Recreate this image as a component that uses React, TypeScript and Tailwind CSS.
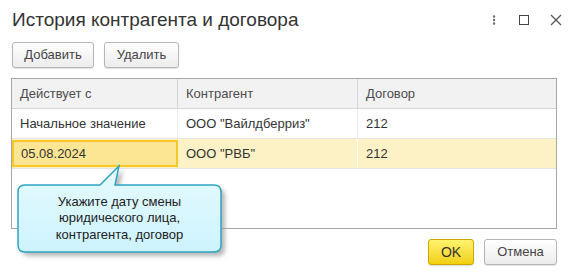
import { MoreVertical } from "lucide-react";

const rows = [
  { date: "Начальное значение", partner: "ООО \"Вайлдберриз\"", contract: "212", selected: false },
  { date: "05.08.2024", partner: "ООО \"РВБ\"", contract: "212", selected: true },
];

function Hint() {
  return (
    <div className="absolute left-[14px] top-[163px] w-[216px] h-[98px]">
      <svg width="216" height="98" className="absolute inset-0">
        <defs>
          <filter id="sh" x="-10%" y="-10%" width="130%" height="140%">
            <feGaussianBlur stdDeviation="2" />
          </filter>
          <linearGradient id="fill" x1="0" y1="0" x2="0" y2="1">
            <stop offset="0" stopColor="#e6fbff" />
            <stop offset="1" stopColor="#cdf3fd" />
          </linearGradient>
        </defs>
        <path
          d="M11 22 H86 L105 3 L101 22 H200 Q207 22 207 29 V82 Q207 89 200 89 H11 Q4 89 4 82 V29 Q4 22 11 22 Z"
          transform="translate(4 4)"
          fill="#9a9a9a"
          opacity="0.7"
          filter="url(#sh)"
        />
        <path
          d="M11 22 H86 L105 3 L101 22 H200 Q207 22 207 29 V82 Q207 89 200 89 H11 Q4 89 4 82 V29 Q4 22 11 22 Z"
          fill="url(#fill)"
          stroke="#2fa3c2"
          strokeWidth="1.5"
        />
      </svg>
      <div className="absolute left-[4px] top-[22px] w-[203px] h-[67px] flex flex-col items-center justify-center text-[13px] leading-[16.5px] text-[#222]">
        <span>Укажите дату смены</span>
        <span>юридического лица,</span>
        <span>контрагента, договор</span>
      </div>
    </div>
  );
}

export default function App() {
  return (
    <div
      className="relative w-[571px] h-[275px] bg-white flex flex-col text-[#333] overflow-hidden"
      style={{ fontFamily: "'Liberation Sans', Arial, sans-serif" }}
    >
      {/* Title bar */}
      <div className="h-[40px] flex items-center pl-[12px] pr-[9px]">
        <h1 className="text-[19px] text-[#333] flex-1">История контрагента и договора</h1>
        <div className="flex items-center gap-[19px] text-[#666]">
          <MoreVertical className="w-[12px] h-[14px]" strokeWidth={3} strokeDasharray="2 2" />
          <span className="w-[10px] h-[10px] border-[1.5px] border-[#444]" />
          <svg width="12" height="12" viewBox="0 0 12 12" className="ml-[2px]">
            <path d="M1 1 L11 11 M11 1 L1 11" stroke="#555" strokeWidth="1.3" />
          </svg>
        </div>
      </div>

      {/* Toolbar */}
      <div className="flex gap-[10px] pl-[12px] mt-[2px]">
        <button className="h-[26px] w-[82px] border border-[#b5b5b5] rounded-[3px] bg-gradient-to-b from-white to-[#ececec] text-[13px] text-[#444] shadow-[0_1px_1px_rgba(0,0,0,0.12)]">
          Добавить
        </button>
        <button className="h-[26px] w-[75px] border border-[#b5b5b5] rounded-[3px] bg-gradient-to-b from-white to-[#ececec] text-[13px] text-[#444] shadow-[0_1px_1px_rgba(0,0,0,0.12)]">
          Удалить
        </button>
      </div>

      {/* Table */}
      <div className="ml-[11px] mt-[10px] w-[546px] h-[151px] border border-[#a6a6a6] text-[13px]">
        <div className="flex h-[30px] bg-[#f2f2f2] border-b border-[#d6d6d6] text-[#4d4d4d]">
          <div className="w-[166px] flex items-center pl-[8px] border-r border-[#d6d6d6]">Действует с</div>
          <div className="w-[180px] flex items-center pl-[8px] border-r border-[#d6d6d6]">Контрагент</div>
          <div className="flex-1 flex items-center pl-[8px]">Договор</div>
        </div>
        {rows.map((r) => (
          <div
            key={r.date}
            className={`flex h-[30px] border-b border-[#e4e4e4] ${r.selected ? "bg-[#fdf2c6]" : "bg-white"}`}
          >
            <div
              className={
                r.selected
                  ? "w-[166px] flex items-center pl-[7px] my-[1px] border-2 border-[#f6c928] bg-[#fce593]"
                  : "w-[166px] flex items-center pl-[8px] border-r border-[#ececec]"
              }
            >
              {r.date}
            </div>
            <div className={`w-[180px] flex items-center pl-[8px] border-r ${r.selected ? "border-white" : "border-[#ececec]"}`}>
              {r.partner}
            </div>
            <div className="flex-1 flex items-center pl-[8px]">{r.contract}</div>
          </div>
        ))}
      </div>

      {/* Footer */}
      <div className="flex justify-end gap-[10px] pr-[14px] mt-[10px]">
        <button className="h-[26px] w-[46px] border border-[#c9a800] rounded-[3px] bg-gradient-to-b from-[#fff36a] to-[#f2d000] text-[14px] text-[#333] shadow-[0_1px_1px_rgba(0,0,0,0.15)]">
          OK
        </button>
        <button className="h-[26px] w-[73px] border border-[#b5b5b5] rounded-[3px] bg-gradient-to-b from-white to-[#ececec] text-[13px] text-[#444] shadow-[0_1px_1px_rgba(0,0,0,0.12)]">
          Отмена
        </button>
      </div>

      <Hint />
    </div>
  );
}
